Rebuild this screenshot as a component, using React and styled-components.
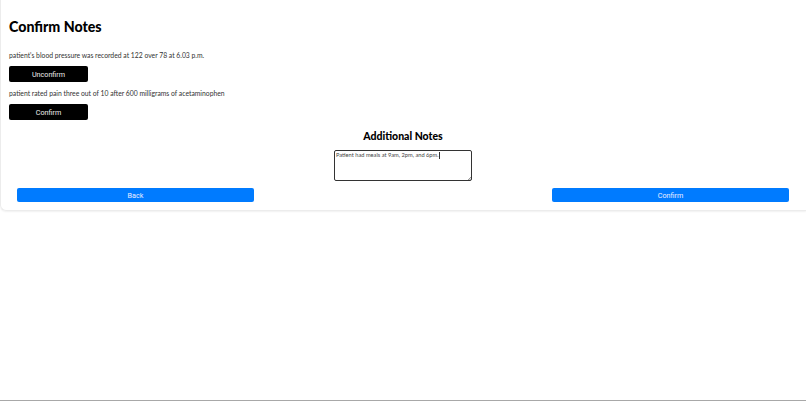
import React from "react";
import styled, { createGlobalStyle } from "styled-components";

const GlobalStyle = createGlobalStyle`
  html, body {
    margin: 0;
    padding: 0;
    height: 100%;
    background: #fff;
  }
  #root {
    height: 100%;
  }
  * {
    box-sizing: border-box;
  }
`;

const Page = styled.div`
  height: 100vh;
  display: flex;
  flex-direction: column;
  font-family: Lato, "Open Sans", sans-serif;
  color: #000;
  border-bottom: 1px solid #a8a8a8;
`;

const Card = styled.main`
  height: 211px;
  padding: 0 9px 0 8px;
  border: 1px solid #ececec;
  border-top: 0;
  border-right: 0;
  border-radius: 0 0 0 6px;
  box-shadow: 0 1px 2px rgba(0, 0, 0, 0.06);
`;

const Title = styled.h1`
  margin: 0;
  padding-top: 17px;
  height: 49px;
  font-size: 14.2px;
  line-height: 19px;
  font-weight: 900;
`;

const NoteText = styled.p`
  margin: 0;
  height: 12px;
  font-size: 6.8px;
  line-height: 12px;
  color: #333;
`;

const NoteList = styled.section`
  display: flex;
  flex-direction: column;
  align-items: flex-start;
`;

const Note = styled.div`
  display: flex;
  flex-direction: column;
  align-items: flex-start;
  gap: 5px;
  margin-bottom: 5px;
`;

const ToggleButton = styled.button`
  width: 79px;
  height: 16px;
  padding: 0;
  border: 0;
  border-radius: 2px;
  background: #000;
  color: #eee;
  font-family: Roboto, Arial, sans-serif;
  font-size: 7.2px;
`;

const AdditionalNotes = styled.section`
  display: flex;
  flex-direction: column;
  align-items: center;
  padding-top: 4px;
`;

const Subtitle = styled.h2`
  margin: 0 0 6px;
  font-size: 10.5px;
  line-height: 15px;
  font-weight: 900;
`;

const InputWrap = styled.div`
  position: relative;
  width: 138px;
  height: 31px;
`;

const NotesInput = styled.textarea`
  display: block;
  width: 100%;
  height: 100%;
  padding: 0 1px;
  border: 1.5px solid #333;
  border-radius: 2px;
  outline: none;
  resize: none;
  font-family: Lato, "Open Sans", sans-serif;
  font-size: 5.7px;
  line-height: 7px;
  color: #444;
`;

// the caret is painted because a headless photo does not show a real one
const Caret = styled.span`
  position: absolute;
  top: 1.5px;
  left: 105px;
  width: 0.5px;
  height: 7px;
  background: #333;
`;

const ResizeGrip = styled.svg`
  position: absolute;
  right: 1.5px;
  bottom: 1.5px;
  width: 3px;
  height: 3px;
`;

const Actions = styled.div`
  display: flex;
  justify-content: space-between;
  padding: 7px 8px 0;
`;

const ActionButton = styled.button`
  width: 237px;
  height: 14px;
  padding: 0;
  border: 0;
  border-radius: 2px;
  background: #007bff;
  color: #eef;
  font-family: Roboto, Arial, sans-serif;
  font-size: 7.2px;
`;

const notes = [
  { text: "patient's blood pressure was recorded at 122 over 78 at 6.03 p.m.", action: "Unconfirm" },
  { text: "patient rated pain three out of 10 after 600 milligrams of acetaminophen", action: "Confirm" },
];

const App = () => {
  return (
    <Page>
      <GlobalStyle />
      <Card>
        <Title>Confirm Notes</Title>
        <NoteList>
          {notes.map((note) => (
            <Note key={note.text}>
              <NoteText>{note.text}</NoteText>
              <ToggleButton>{note.action}</ToggleButton>
            </Note>
          ))}
        </NoteList>
        <AdditionalNotes>
          <Subtitle>Additional Notes</Subtitle>
          <InputWrap>
            <NotesInput defaultValue="Patient had meals at 9am, 2pm, and 6pm." />
            <Caret />
            <ResizeGrip viewBox="0 0 3 3">
              <path d="M3 0L0 3M3 1.5L1.5 3" stroke="#555" strokeWidth="0.6" />
            </ResizeGrip>
          </InputWrap>
        </AdditionalNotes>
        <Actions>
          <ActionButton>Back</ActionButton>
          <ActionButton>Confirm</ActionButton>
        </Actions>
      </Card>
    </Page>
  );
};

export default App;
